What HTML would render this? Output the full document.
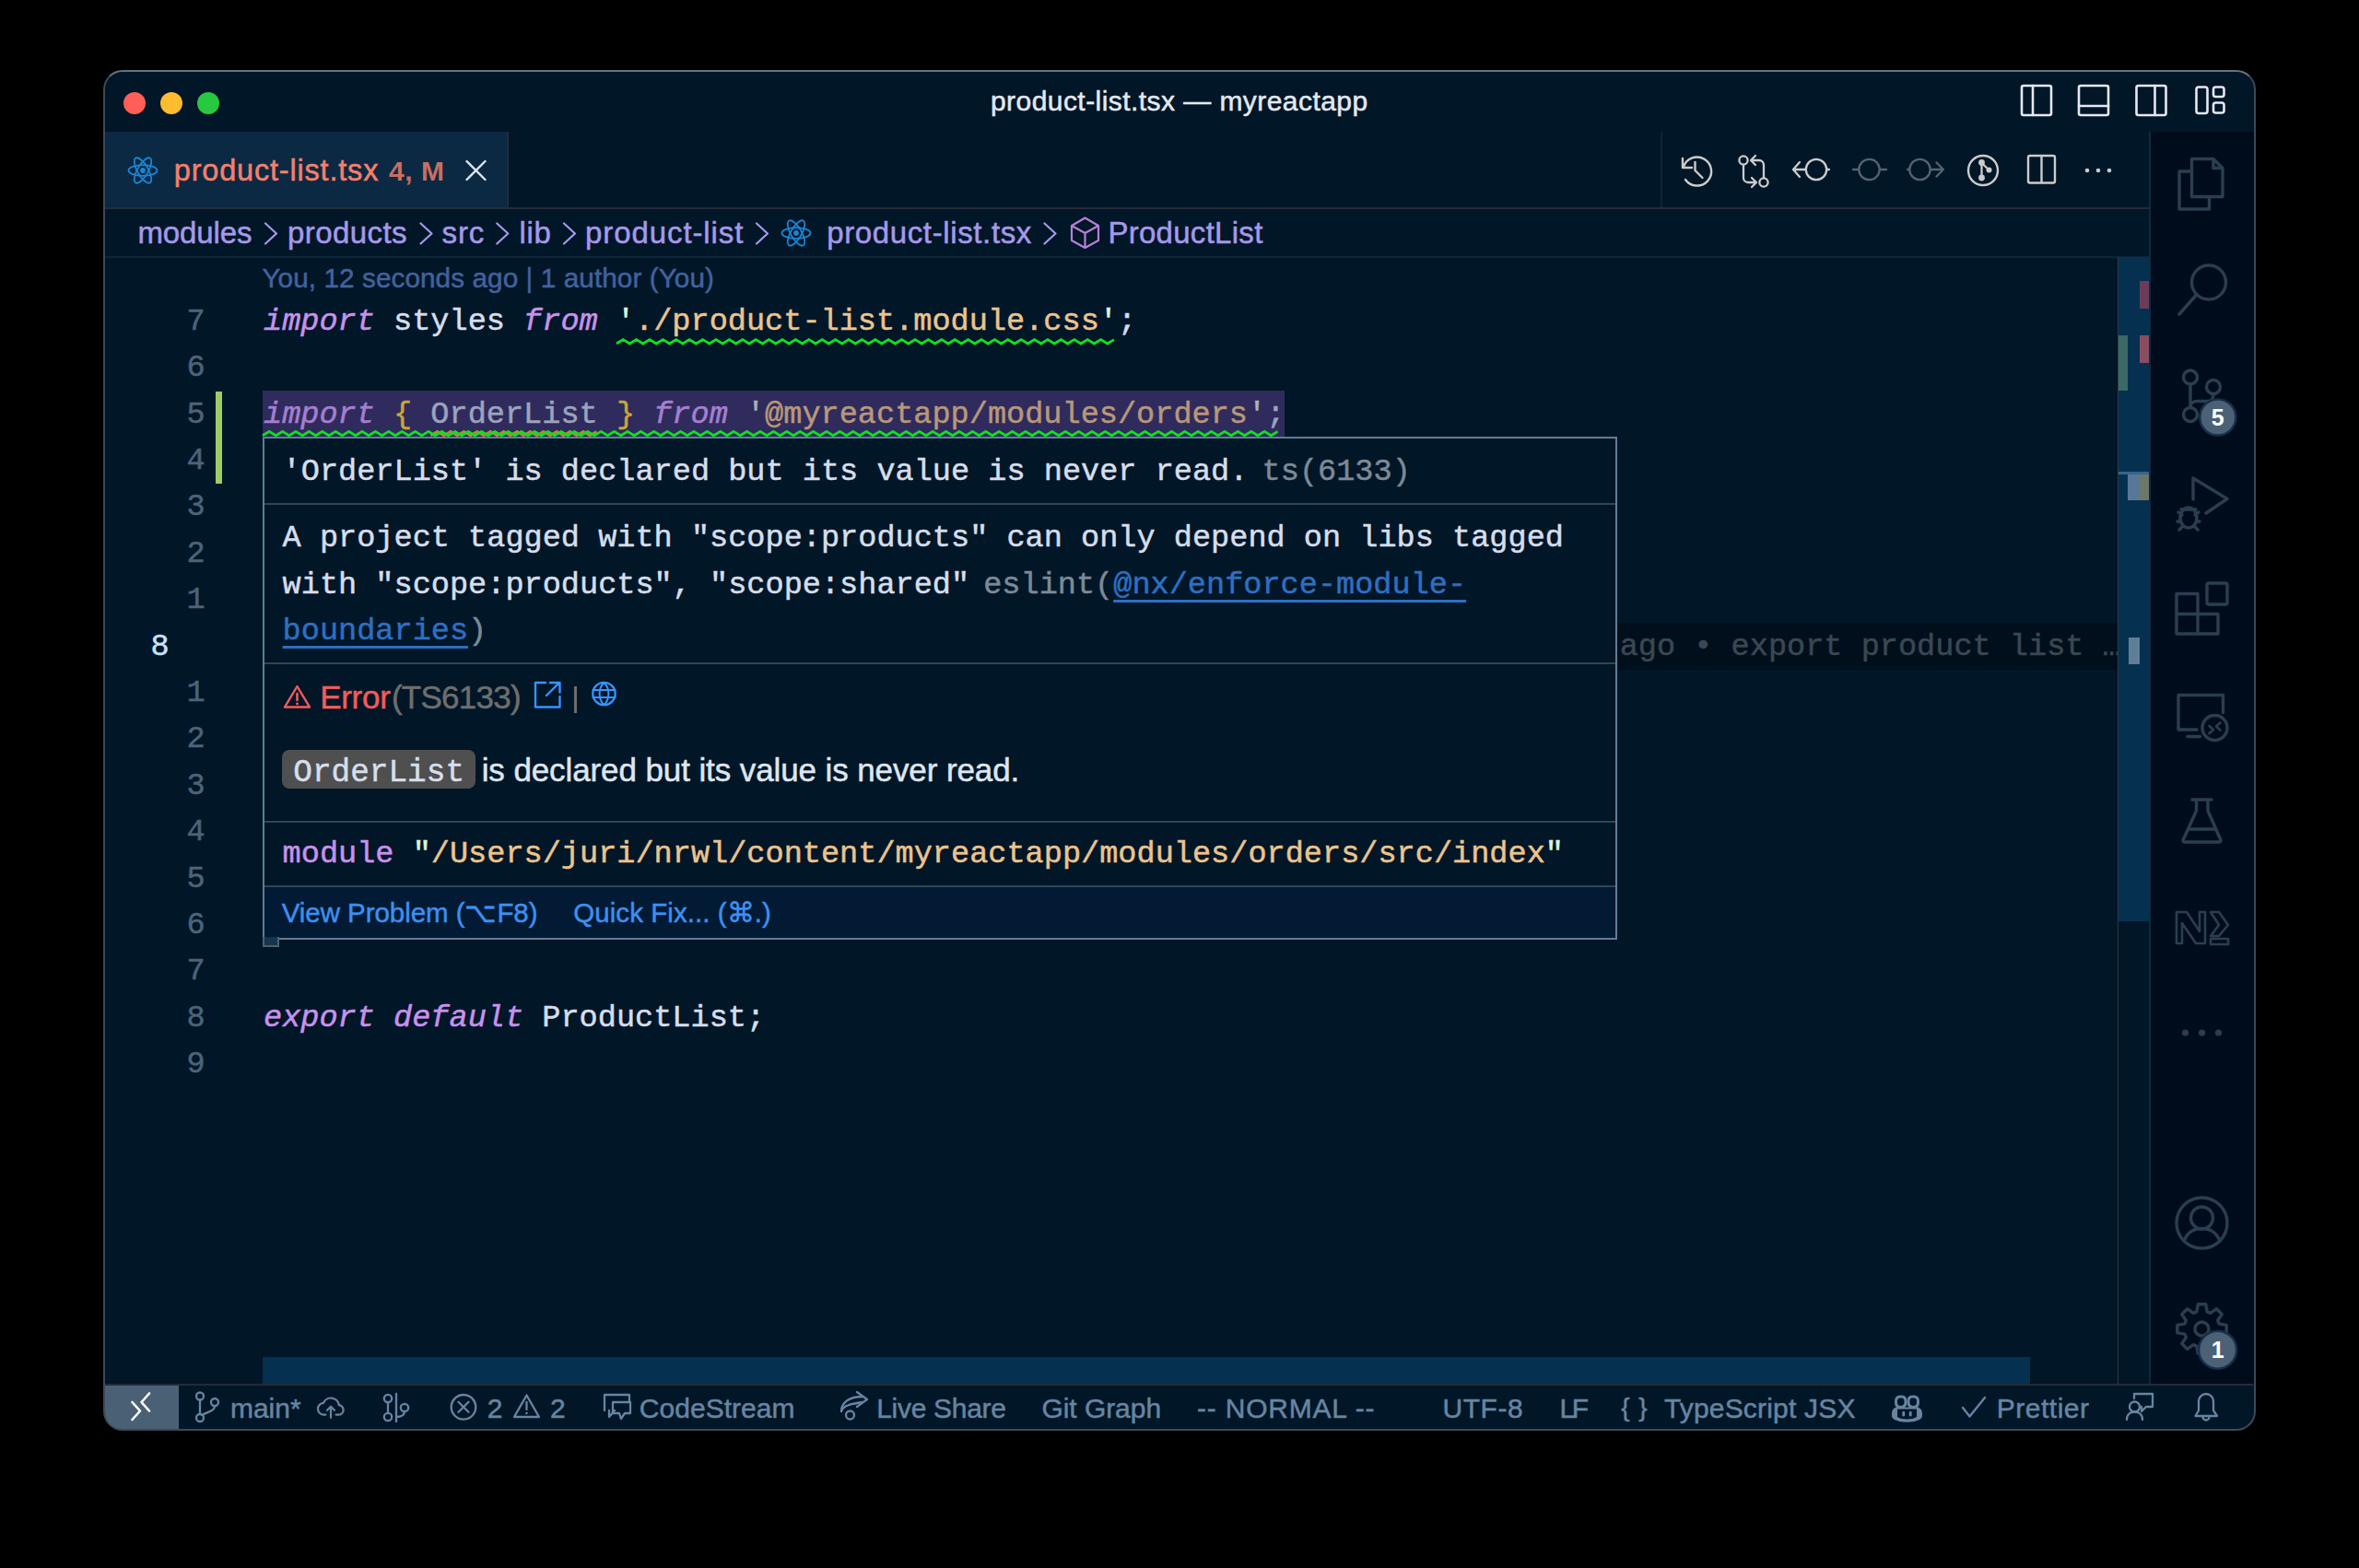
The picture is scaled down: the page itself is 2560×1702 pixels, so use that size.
<!DOCTYPE html>
<html><head><meta charset="utf-8">
<style>
*{margin:0;padding:0;box-sizing:border-box}
html,body{width:2560px;height:1702px;background:#000;overflow:hidden}
body{position:relative;font-family:"Liberation Sans",sans-serif}
.a{position:absolute}
.t{white-space:pre;line-height:1;-webkit-text-stroke:0.5px currentColor}
.t span{-webkit-text-stroke:0.5px currentColor}
</style></head>
<body>
<div class="a" style="left:112px;top:76px;width:2336px;height:1477px;border-radius:21px;background:#011627;border:2px solid #3c4a57;border-top-color:#66737f;overflow:hidden"></div>
<div class="a" style="left:134px;top:100px;width:24px;height:24px;background:#ff5f57;border-radius:50%"></div>
<div class="a" style="left:174px;top:100px;width:24px;height:24px;background:#febc2e;border-radius:50%"></div>
<div class="a" style="left:214px;top:100px;width:24px;height:24px;background:#28c840;border-radius:50%"></div>
<div class="a t" id="r0" style="left:1075.0px;top:94.60px;font-family:'Liberation Sans',sans-serif;font-size:30px;color:#e4e9f1;letter-spacing:0.439px;">product-list.tsx — myreactapp</div>
<div class="a" style="left:114px;top:143px;width:436px;height:82px;background:#0b2942;"></div>
<div class="a" style="left:550px;top:143px;width:2px;height:82px;background:#272b3b;"></div>
<div class="a" style="left:114px;top:225px;width:2219px;height:2px;background:#272b3b;"></div>
<div class="a" style="left:1802px;top:143px;width:2px;height:82px;background:#0e2436;"></div>
<div class="a t" id="r1" style="left:188.8px;top:168.57px;font-family:'Liberation Sans',sans-serif;font-size:32.5px;color:#f4806c;letter-spacing:0.806px;">product-list.tsx</div>
<div class="a t" id="r2" style="left:422.1px;top:170.70px;font-family:'Liberation Sans',sans-serif;font-size:30px;color:#c86e62;letter-spacing:0.514px;font-weight:bold;-webkit-text-stroke:0;">4, M</div>
<div class="a t" id="r3" style="left:149.5px;top:236.15px;font-family:'Liberation Sans',sans-serif;font-size:33px;color:#a599e9;letter-spacing:-0.116px;">modules</div>
<div class="a t" id="r4" style="left:312.1px;top:236.15px;font-family:'Liberation Sans',sans-serif;font-size:33px;color:#a599e9;letter-spacing:0.409px;">products</div>
<div class="a t" id="r5" style="left:479.6px;top:236.15px;font-family:'Liberation Sans',sans-serif;font-size:33px;color:#a599e9;letter-spacing:0.820px;">src</div>
<div class="a t" id="r6" style="left:563.4px;top:236.15px;font-family:'Liberation Sans',sans-serif;font-size:33px;color:#a599e9;letter-spacing:0.754px;">lib</div>
<div class="a t" id="r7" style="left:635.0px;top:236.15px;font-family:'Liberation Sans',sans-serif;font-size:33px;color:#a599e9;letter-spacing:0.914px;">product-list</div>
<div class="a t" id="r8" style="left:897.2px;top:236.15px;font-family:'Liberation Sans',sans-serif;font-size:33px;color:#a599e9;letter-spacing:0.627px;">product-list.tsx</div>
<div class="a t" id="r9" style="left:1202.4px;top:236.15px;font-family:'Liberation Sans',sans-serif;font-size:33px;color:#a599e9;letter-spacing:0.285px;">ProductList</div>
<div class="a" style="left:114px;top:278px;width:2218px;height:2px;background:#0d2539;"></div>
<div class="a" style="left:286px;top:676.2px;width:2012px;height:50.4px;background:#010f1c;"></div>
<div class="a" style="left:285px;top:424px;width:1108.8px;height:50.4px;background:#2f2b5d;"></div>
<div class="a" style="left:234px;top:424.5px;width:7px;height:100.8px;background:#9ccc65;"></div>
<div class="a t" id="r10" style="left:284.4px;top:286.86px;font-family:'Liberation Sans',sans-serif;font-size:29.7px;color:#43629d;letter-spacing:0.088px;">You, 12 seconds ago | 1 author (You)</div>
<div class="a t" style="left:202.5px;top:332.86px;font-family:'Liberation Mono',monospace;font-size:33.6px;color:#4b6479;">7</div>
<div class="a t" style="left:202.5px;top:383.26px;font-family:'Liberation Mono',monospace;font-size:33.6px;color:#4b6479;">6</div>
<div class="a t" style="left:202.5px;top:433.66px;font-family:'Liberation Mono',monospace;font-size:33.6px;color:#4b6479;">5</div>
<div class="a t" style="left:202.5px;top:484.06px;font-family:'Liberation Mono',monospace;font-size:33.6px;color:#4b6479;">4</div>
<div class="a t" style="left:202.5px;top:534.46px;font-family:'Liberation Mono',monospace;font-size:33.6px;color:#4b6479;">3</div>
<div class="a t" style="left:202.5px;top:584.86px;font-family:'Liberation Mono',monospace;font-size:33.6px;color:#4b6479;">2</div>
<div class="a t" style="left:202.5px;top:635.26px;font-family:'Liberation Mono',monospace;font-size:33.6px;color:#4b6479;">1</div>
<div class="a t" style="left:163.5px;top:685.66px;font-family:'Liberation Mono',monospace;font-size:33.6px;color:#c5e4fd;">8</div>
<div class="a t" style="left:202.5px;top:736.06px;font-family:'Liberation Mono',monospace;font-size:33.6px;color:#4b6479;">1</div>
<div class="a t" style="left:202.5px;top:786.46px;font-family:'Liberation Mono',monospace;font-size:33.6px;color:#4b6479;">2</div>
<div class="a t" style="left:202.5px;top:836.86px;font-family:'Liberation Mono',monospace;font-size:33.6px;color:#4b6479;">3</div>
<div class="a t" style="left:202.5px;top:887.26px;font-family:'Liberation Mono',monospace;font-size:33.6px;color:#4b6479;">4</div>
<div class="a t" style="left:202.5px;top:937.66px;font-family:'Liberation Mono',monospace;font-size:33.6px;color:#4b6479;">5</div>
<div class="a t" style="left:202.5px;top:988.06px;font-family:'Liberation Mono',monospace;font-size:33.6px;color:#4b6479;">6</div>
<div class="a t" style="left:202.5px;top:1038.46px;font-family:'Liberation Mono',monospace;font-size:33.6px;color:#4b6479;">7</div>
<div class="a t" style="left:202.5px;top:1088.86px;font-family:'Liberation Mono',monospace;font-size:33.6px;color:#4b6479;">8</div>
<div class="a t" style="left:202.5px;top:1139.26px;font-family:'Liberation Mono',monospace;font-size:33.6px;color:#4b6479;">9</div>
<div class="a t" style="left:286.0px;top:332.86px;font-family:'Liberation Mono',monospace;font-size:33.6px;"><span style="color:#c792ea;font-style:italic;">import</span><span style="color:#d6deeb;"> styles </span><span style="color:#c792ea;font-style:italic;">from</span><span style="color:#d6deeb;"> </span><span style="color:#d9f5dd;">&#x27;</span><span style="color:#ecc48d;">./product-list.module.css</span><span style="color:#d9f5dd;">&#x27;</span><span style="color:#d6deeb;">;</span></div>
<div class="a t" style="left:286.0px;top:433.66px;font-family:'Liberation Mono',monospace;font-size:33.6px;"><span style="color:#a47fcf;font-style:italic;">import</span><span style="color:#d6deeb;"> </span><span style="color:#c9a63a;">{</span><span style="color:#9ca3bd;"> OrderList </span><span style="color:#c9a63a;">}</span><span style="color:#d6deeb;"> </span><span style="color:#a47fcf;font-style:italic;">from</span><span style="color:#d6deeb;"> </span><span style="color:#a8b3b0;">&#x27;</span><span style="color:#b8977a;">@myreactapp/modules/orders</span><span style="color:#a8b3b0;">&#x27;</span><span style="color:#9ca3bd;">;</span></div>
<div class="a t" style="left:286.0px;top:1088.86px;font-family:'Liberation Mono',monospace;font-size:33.6px;"><span style="color:#c792ea;font-style:italic;">export</span><span style="color:#d6deeb;"> </span><span style="color:#c792ea;font-style:italic;">default</span><span style="color:#d6deeb;"> ProductList;</span></div>
<div class="a t" style="left:1757.7px;top:685.66px;font-family:'Liberation Mono',monospace;font-size:33.6px;color:#3a4853;">ago • export product list …</div>
<div class="a" style="left:285px;top:474px;width:1470px;height:545.5px;background:#011627;border:2px solid #5f7e97"></div>
<div class="a" style="left:287px;top:962px;width:1466px;height:55.5px;background:#021a33;"></div>
<div class="a" style="left:287px;top:546px;width:1466px;height:2px;background:#2e465a;"></div>
<div class="a" style="left:287px;top:719px;width:1466px;height:2px;background:#2e465a;"></div>
<div class="a" style="left:287px;top:891px;width:1466px;height:2px;background:#2e465a;"></div>
<div class="a" style="left:287px;top:961px;width:1466px;height:2px;background:#2e465a;"></div>
<div class="a t" style="left:306.6px;top:496.26px;font-family:'Liberation Mono',monospace;font-size:33.6px;color:#d6deeb;">'OrderList' is declared but its value is never read.</div>
<div class="a t" style="left:1369.6px;top:496.26px;font-family:'Liberation Mono',monospace;font-size:33.6px;color:#7d8a96;">ts(6133)</div>
<div class="a t" style="left:306.6px;top:568.36px;font-family:'Liberation Mono',monospace;font-size:33.6px;color:#d6deeb;">A project tagged with "scope:products" can only depend on libs tagged</div>
<div class="a t" style="left:306.6px;top:619.26px;font-family:'Liberation Mono',monospace;font-size:33.6px;color:#d6deeb;">with "scope:products", "scope:shared"</div>
<div class="a t" style="left:1067.2px;top:619.26px;font-family:'Liberation Mono',monospace;font-size:33.6px;"><span style="color:#7d8a96;">eslint(</span><span style="color:#2e6fc2;text-decoration:underline;text-decoration-thickness:3px;text-underline-offset:7px;">@nx/enforce-module-</span></div>
<div class="a t" style="left:306.6px;top:669.46px;font-family:'Liberation Mono',monospace;font-size:33.6px;"><span style="color:#2e6fc2;text-decoration:underline;text-decoration-thickness:3px;text-underline-offset:7px;">boundaries</span><span style="color:#7d8a96;">)</span></div>
<div class="a t" id="r11" style="left:347.2px;top:738.95px;font-family:'Liberation Sans',sans-serif;font-size:35px;color:#f25c5c;letter-spacing:-0.295px;">Error</div>
<div class="a t" id="r12" style="left:424.9px;top:738.95px;font-family:'Liberation Sans',sans-serif;font-size:35px;color:#6e6e6e;letter-spacing:-0.729px;">(TS6133)</div>
<div class="a" style="left:623px;top:745px;width:2.6px;height:29px;background:#6e6e6e;"></div>
<div class="a" style="left:306px;top:814px;width:209.5px;height:42px;background:#4f4f4f;border-radius:8px"></div>
<div class="a t" style="left:318.3px;top:821.85px;font-family:'Liberation Mono',monospace;font-size:34.4px;color:#d6deeb;">OrderList</div>
<div class="a t" id="r13" style="left:522.7px;top:818.45px;font-family:'Liberation Sans',sans-serif;font-size:35px;color:#dfe6f0;letter-spacing:-0.101px;">is declared but its value is never read.</div>
<div class="a t" style="left:306.6px;top:910.76px;font-family:'Liberation Mono',monospace;font-size:33.6px;"><span style="color:#c792ea;">module</span><span style="color:#d6deeb;"> </span><span style="color:#d9f5dd;">&quot;</span><span style="color:#ecc48d;">/Users/juri/nrwl/content/myreactapp/modules/orders/src/index</span><span style="color:#d9f5dd;">&quot;</span></div>
<div class="a t" id="r14" style="left:305.7px;top:976.42px;font-family:'Liberation Sans',sans-serif;font-size:29.5px;color:#3d8ff0;letter-spacing:-0.051px;">View Problem (⌥F8)</div>
<div class="a t" id="r15" style="left:622.2px;top:976.42px;font-family:'Liberation Sans',sans-serif;font-size:29.5px;color:#3d8ff0;letter-spacing:0.075px;">Quick Fix... (⌘.)</div>
<div class="a" style="left:285px;top:1017px;width:18px;height:11px;background:#16344e;border:2px solid #4e6070;border-top:none"></div>
<div class="a" style="left:2298px;top:279px;width:1px;height:1224px;background:#2f3a45;"></div>
<div class="a" style="left:2298.5px;top:279px;width:34px;height:721px;background:#06304f;"></div>
<div class="a" style="left:2321.5px;top:305px;width:11px;height:29.6px;background:#6c3c5a;"></div>
<div class="a" style="left:2321.5px;top:364px;width:11px;height:29.6px;background:#8a4e62;"></div>
<div class="a" style="left:2298.5px;top:364px;width:10.5px;height:60px;background:#3b6a66;"></div>
<div class="a" style="left:2298.5px;top:511.5px;width:34px;height:3.5px;background:#35658f;"></div>
<div class="a" style="left:2309px;top:515px;width:12.5px;height:28px;background:#587796;"></div>
<div class="a" style="left:2321.5px;top:515px;width:11px;height:28px;background:#6e7668;"></div>
<div class="a" style="left:2309.5px;top:691.5px;width:12.5px;height:29.5px;background:#5f7e97;"></div>
<div class="a" style="left:285px;top:1473px;width:1918px;height:29.5px;background:#06304f;"></div>
<div class="a" style="left:2334px;top:143px;width:112px;height:1359px;background:#000c1c;"></div>
<div class="a" style="left:2332px;top:143px;width:2px;height:1359px;background:#11293f;"></div>
<div class="a" style="left:114px;top:1502px;width:2331px;height:2px;background:#262a39;"></div>
<div class="a" style="left:114px;top:1504px;width:80px;height:47px;background:#4a6075;border-bottom-left-radius:18px"></div>
<div class="a t" id="r16" style="left:249.9px;top:1513.60px;font-family:'Liberation Sans',sans-serif;font-size:30px;color:#6785a1;letter-spacing:-0.001px;">main*</div>
<div class="a t" style="left:528.7px;top:1513.60px;font-family:'Liberation Sans',sans-serif;font-size:30px;color:#6785a1;">2</div>
<div class="a t" style="left:597.1px;top:1513.60px;font-family:'Liberation Sans',sans-serif;font-size:30px;color:#6785a1;">2</div>
<div class="a t" id="r17" style="left:693.8px;top:1513.60px;font-family:'Liberation Sans',sans-serif;font-size:30px;color:#6785a1;letter-spacing:0.031px;">CodeStream</div>
<div class="a t" id="r18" style="left:951.2px;top:1513.60px;font-family:'Liberation Sans',sans-serif;font-size:30px;color:#6785a1;letter-spacing:-0.293px;">Live Share</div>
<div class="a t" id="r19" style="left:1130.4px;top:1513.60px;font-family:'Liberation Sans',sans-serif;font-size:30px;color:#6785a1;letter-spacing:-0.045px;">Git Graph</div>
<div class="a t" id="r20" style="left:1299.1px;top:1513.60px;font-family:'Liberation Sans',sans-serif;font-size:30px;color:#6785a1;letter-spacing:0.784px;">-- NORMAL --</div>
<div class="a t" id="r21" style="left:1565.6px;top:1513.60px;font-family:'Liberation Sans',sans-serif;font-size:30px;color:#6785a1;letter-spacing:0.500px;">UTF-8</div>
<div class="a t" id="r22" style="left:1692.4px;top:1513.60px;font-family:'Liberation Sans',sans-serif;font-size:30px;color:#6785a1;letter-spacing:-3.416px;">LF</div>
<div class="a t" id="r23" style="left:1759.3px;top:1514.30px;font-family:'Liberation Sans',sans-serif;font-size:28px;color:#6785a1;letter-spacing:0.878px;">{ }</div>
<div class="a t" id="r24" style="left:1805.9px;top:1513.60px;font-family:'Liberation Sans',sans-serif;font-size:30px;color:#6785a1;letter-spacing:0.186px;">TypeScript JSX</div>
<div class="a t" id="r25" style="left:2166.8px;top:1513.60px;font-family:'Liberation Sans',sans-serif;font-size:30px;color:#6785a1;letter-spacing:0.500px;">Prettier</div>
<svg class="a" style="left:0;top:0" width="2560" height="1702" viewBox="0 0 2560 1702">
<path d="M2194,95 a2,2 0 0 1 2,-2 h28 a2,2 0 0 1 2,2 v28 a2,2 0 0 1 -2,2 h-28 a2,2 0 0 1 -2,-2 z" stroke="#e6e8f4" stroke-width="2.6" fill="none" stroke-linecap="round" stroke-linejoin="round" />
<path d="M2206,93 v32" stroke="#e6e8f4" stroke-width="2.6" fill="none" stroke-linecap="round" stroke-linejoin="round" />
<path d="M2256,95 a2,2 0 0 1 2,-2 h28 a2,2 0 0 1 2,2 v28 a2,2 0 0 1 -2,2 h-28 a2,2 0 0 1 -2,-2 z" stroke="#e6e8f4" stroke-width="2.6" fill="none" stroke-linecap="round" stroke-linejoin="round" />
<path d="M2256,115 h32" stroke="#e6e8f4" stroke-width="2.6" fill="none" stroke-linecap="round" stroke-linejoin="round" />
<path d="M2318.5,95 a2,2 0 0 1 2,-2 h28 a2,2 0 0 1 2,2 v28 a2,2 0 0 1 -2,2 h-28 a2,2 0 0 1 -2,-2 z" stroke="#e6e8f4" stroke-width="2.6" fill="none" stroke-linecap="round" stroke-linejoin="round" />
<path d="M2338.5,93 v32" stroke="#e6e8f4" stroke-width="2.6" fill="none" stroke-linecap="round" stroke-linejoin="round" />
<path d="M2383.5,97 a2.5,2.5 0 0 1 2.5,-2.5 h7 a2.5,2.5 0 0 1 2.5,2.5 v23.5 a2.5,2.5 0 0 1 -2.5,2.5 h-7 a2.5,2.5 0 0 1 -2.5,-2.5 z" stroke="#e6e8f4" stroke-width="2.6" fill="none" stroke-linecap="round" stroke-linejoin="round" />
<path d="M2402,97 a2.5,2.5 0 0 1 2.5,-2.5 h6.5 a2.5,2.5 0 0 1 2.5,2.5 v5.5 a2.5,2.5 0 0 1 -2.5,2.5 h-6.5 a2.5,2.5 0 0 1 -2.5,-2.5 z" stroke="#e6e8f4" stroke-width="2.6" fill="none" stroke-linecap="round" stroke-linejoin="round" />
<path d="M2402,114 a2.5,2.5 0 0 1 2.5,-2.5 h6.5 a2.5,2.5 0 0 1 2.5,2.5 v6 a2.5,2.5 0 0 1 -2.5,2.5 h-6.5 a2.5,2.5 0 0 1 -2.5,-2.5 z" stroke="#e6e8f4" stroke-width="2.6" fill="none" stroke-linecap="round" stroke-linejoin="round" />
<ellipse cx="155" cy="185" rx="15.5" ry="5.8" transform="rotate(0 155 185)" stroke="#1a86d3" stroke-width="1.8" fill="none"/>
<ellipse cx="155" cy="185" rx="15.5" ry="5.8" transform="rotate(60 155 185)" stroke="#1a86d3" stroke-width="1.8" fill="none"/>
<ellipse cx="155" cy="185" rx="15.5" ry="5.8" transform="rotate(120 155 185)" stroke="#1a86d3" stroke-width="1.8" fill="none"/>
<circle cx="155" cy="185" r="2.9" fill="#1a86d3"/>
<path d="M506.5,175 L526.5,195 M526.5,175 L506.5,195" stroke="#dde4ee" stroke-width="2.4" fill="none" stroke-linecap="round" stroke-linejoin="round" />
<path d="M1826,172 v10 h10" stroke="#cccccc" stroke-width="2.4" fill="none" stroke-linecap="round" stroke-linejoin="round" />
<path d="M1827,181 A15.5,15.5 0 1 1 1829,195" stroke="#cccccc" stroke-width="2.4" fill="none" stroke-linecap="round" stroke-linejoin="round" />
<path d="M1839.5,176 v9 l8,8" stroke="#cccccc" stroke-width="2.4" fill="none" stroke-linecap="round" stroke-linejoin="round" />
<circle cx="1892" cy="174" r="4.6" stroke="#cccccc" stroke-width="2.3" fill="none"/>
<circle cx="1914" cy="198" r="4.6" stroke="#cccccc" stroke-width="2.3" fill="none"/>
<path d="M1892,179 v14 a5,5 0 0 0 5,5 h8 M1901,193 l5,5 l-5,5" stroke="#cccccc" stroke-width="2.3" fill="none" stroke-linecap="round" stroke-linejoin="round" />
<path d="M1914,193 v-14 a5,5 0 0 0 -5,-5 h-8 M1905,169 l-5,5 l5,5" stroke="#cccccc" stroke-width="2.3" fill="none" stroke-linecap="round" stroke-linejoin="round" />
<circle cx="1971" cy="184" r="11.2" stroke="#cccccc" stroke-width="2.3" fill="none"/>
<path d="M1983,184 h2 M1959.5,184 h-12 M1953,176 l-7,8 l7,8" stroke="#cccccc" stroke-width="2.3" fill="none" stroke-linecap="round" stroke-linejoin="round" />
<circle cx="2028.5" cy="184" r="11.2" stroke="#56626e" stroke-width="2.3" fill="none"/>
<path d="M2011,184 h6 M2040,184 h7" stroke="#56626e" stroke-width="2.3" fill="none" stroke-linecap="round" stroke-linejoin="round" />
<circle cx="2083.5" cy="184" r="11.2" stroke="#56626e" stroke-width="2.3" fill="none"/>
<path d="M2070,184 h2 M2095,184 h13 M2101.5,176.5 l7.5,7.5 l-7.5,7.5" stroke="#56626e" stroke-width="2.3" fill="none" stroke-linecap="round" stroke-linejoin="round" />
<circle cx="2152" cy="185" r="16" stroke="#cccccc" stroke-width="2.4" fill="none"/>
<circle cx="2150.5" cy="176.5" r="3.4" stroke="#cccccc" stroke-width="0" fill="#cccccc"/>
<circle cx="2150.5" cy="193" r="3.4" stroke="#cccccc" stroke-width="0" fill="#cccccc"/>
<circle cx="2158.5" cy="184.5" r="3.0" stroke="#cccccc" stroke-width="0" fill="#cccccc"/>
<path d="M2150.5,176 v17 M2150.5,177 l7.5,7" stroke="#cccccc" stroke-width="2.3" fill="none" stroke-linecap="round" stroke-linejoin="round" />
<path d="M2201,171 a2,2 0 0 1 2,-2 h25 a2,2 0 0 1 2,2 v25.5 a2,2 0 0 1 -2,2 h-25 a2,2 0 0 1 -2,-2 z M2215.5,169 v29.5" stroke="#cccccc" stroke-width="2.4" fill="none" stroke-linecap="round" stroke-linejoin="round" />
<circle cx="2265" cy="185" r="2.3" stroke="#cccccc" stroke-width="0" fill="#cccccc"/>
<circle cx="2277" cy="185" r="2.3" stroke="#cccccc" stroke-width="0" fill="#cccccc"/>
<circle cx="2289" cy="185" r="2.3" stroke="#cccccc" stroke-width="0" fill="#cccccc"/>
<path d="M288,242.5 L300,253.5 L288,264.5" stroke="#a599e9" stroke-width="2.2" fill="none" stroke-linecap="round" stroke-linejoin="round" />
<path d="M456.5,242.5 L468.5,253.5 L456.5,264.5" stroke="#a599e9" stroke-width="2.2" fill="none" stroke-linecap="round" stroke-linejoin="round" />
<path d="M539.3,242.5 L551.3,253.5 L539.3,264.5" stroke="#a599e9" stroke-width="2.2" fill="none" stroke-linecap="round" stroke-linejoin="round" />
<path d="M612,242.5 L624,253.5 L612,264.5" stroke="#a599e9" stroke-width="2.2" fill="none" stroke-linecap="round" stroke-linejoin="round" />
<path d="M821,242.5 L833,253.5 L821,264.5" stroke="#a599e9" stroke-width="2.2" fill="none" stroke-linecap="round" stroke-linejoin="round" />
<path d="M1133.5,242.5 L1145.5,253.5 L1133.5,264.5" stroke="#a599e9" stroke-width="2.2" fill="none" stroke-linecap="round" stroke-linejoin="round" />
<ellipse cx="864" cy="253" rx="15.5" ry="5.8" transform="rotate(0 864 253)" stroke="#1a86d3" stroke-width="1.8" fill="none"/>
<ellipse cx="864" cy="253" rx="15.5" ry="5.8" transform="rotate(60 864 253)" stroke="#1a86d3" stroke-width="1.8" fill="none"/>
<ellipse cx="864" cy="253" rx="15.5" ry="5.8" transform="rotate(120 864 253)" stroke="#1a86d3" stroke-width="1.8" fill="none"/>
<circle cx="864" cy="253" r="2.9" fill="#1a86d3"/>
<path d="M1177.5,236.5 L1192,245 V261 L1177.5,269 L1163,261 V245 Z M1163,245 L1177.5,253 L1192,245 M1177.5,253 V269" stroke="#b77fd6" stroke-width="2.2" fill="none" stroke-linecap="round" stroke-linejoin="round" />
<polyline points="669.0,373.0 676.2,368.6 683.4,373.0 690.6,368.6 697.8,373.0 705.0,368.6 712.2,373.0 719.4,368.6 726.6,373.0 733.8,368.6 741.0,373.0 748.2,368.6 755.4,373.0 762.6,368.6 769.8,373.0 777.0,368.6 784.2,373.0 791.4,368.6 798.6,373.0 805.8,368.6 813.0,373.0 820.2,368.6 827.4,373.0 834.6,368.6 841.8,373.0 849.0,368.6 856.2,373.0 863.4,368.6 870.6,373.0 877.8,368.6 885.0,373.0 892.2,368.6 899.4,373.0 906.6,368.6 913.8,373.0 921.0,368.6 928.2,373.0 935.4,368.6 942.6,373.0 949.8,368.6 957.0,373.0 964.2,368.6 971.4,373.0 978.6,368.6 985.8,373.0 993.0,368.6 1000.2,373.0 1007.4,368.6 1014.6,373.0 1021.8,368.6 1029.0,373.0 1036.2,368.6 1043.4,373.0 1050.6,368.6 1057.8,373.0 1065.0,368.6 1072.2,373.0 1079.4,368.6 1086.6,373.0 1093.8,368.6 1101.0,373.0 1108.2,368.6 1115.4,373.0 1122.6,368.6 1129.8,373.0 1137.0,368.6 1144.2,373.0 1151.4,368.6 1158.6,373.0 1165.8,368.6 1173.0,373.0 1180.2,368.6 1187.4,373.0 1194.6,368.6 1201.8,373.0 1209.0,368.6" stroke="#10e020" stroke-width="2.8" fill="none"/>
<polyline points="467.4,472.8 474.6,468.4 481.8,472.8 489.0,468.4 496.2,472.8 503.4,468.4 510.6,472.8 517.8,468.4 525.0,472.8 532.2,468.4 539.4,472.8 546.6,468.4 553.8,472.8 561.0,468.4 568.2,472.8 575.4,468.4 582.6,472.8 589.8,468.4 597.0,472.8 604.2,468.4 611.4,472.8 618.6,468.4 625.8,472.8 633.0,468.4 640.2,472.8 647.4,468.4" stroke="#c0843a" stroke-width="2.8" fill="none"/>
<polyline points="285.0,472.8 292.2,468.4 299.4,472.8 306.6,468.4 313.8,472.8 321.0,468.4 328.2,472.8 335.4,468.4 342.6,472.8 349.8,468.4 357.0,472.8 364.2,468.4 371.4,472.8 378.6,468.4 385.8,472.8 393.0,468.4 400.2,472.8 407.4,468.4 414.6,472.8 421.8,468.4 429.0,472.8 436.2,468.4 443.4,472.8 450.6,468.4 457.8,472.8 465.0,468.4 472.2,472.8 479.4,468.4 486.6,472.8 493.8,468.4 501.0,472.8 508.2,468.4 515.4,472.8 522.6,468.4 529.8,472.8 537.0,468.4 544.2,472.8 551.4,468.4 558.6,472.8 565.8,468.4 573.0,472.8 580.2,468.4 587.4,472.8 594.6,468.4 601.8,472.8 609.0,468.4 616.2,472.8 623.4,468.4 630.6,472.8 637.8,468.4 645.0,472.8 652.2,468.4 659.4,472.8 666.6,468.4 673.8,472.8 681.0,468.4 688.2,472.8 695.4,468.4 702.6,472.8 709.8,468.4 717.0,472.8 724.2,468.4 731.4,472.8 738.6,468.4 745.8,472.8 753.0,468.4 760.2,472.8 767.4,468.4 774.6,472.8 781.8,468.4 789.0,472.8 796.2,468.4 803.4,472.8 810.6,468.4 817.8,472.8 825.0,468.4 832.2,472.8 839.4,468.4 846.6,472.8 853.8,468.4 861.0,472.8 868.2,468.4 875.4,472.8 882.6,468.4 889.8,472.8 897.0,468.4 904.2,472.8 911.4,468.4 918.6,472.8 925.8,468.4 933.0,472.8 940.2,468.4 947.4,472.8 954.6,468.4 961.8,472.8 969.0,468.4 976.2,472.8 983.4,468.4 990.6,472.8 997.8,468.4 1005.0,472.8 1012.2,468.4 1019.4,472.8 1026.6,468.4 1033.8,472.8 1041.0,468.4 1048.2,472.8 1055.4,468.4 1062.6,472.8 1069.8,468.4 1077.0,472.8 1084.2,468.4 1091.4,472.8 1098.6,468.4 1105.8,472.8 1113.0,468.4 1120.2,472.8 1127.4,468.4 1134.6,472.8 1141.8,468.4 1149.0,472.8 1156.2,468.4 1163.4,472.8 1170.6,468.4 1177.8,472.8 1185.0,468.4 1192.2,472.8 1199.4,468.4 1206.6,472.8 1213.8,468.4 1221.0,472.8 1228.2,468.4 1235.4,472.8 1242.6,468.4 1249.8,472.8 1257.0,468.4 1264.2,472.8 1271.4,468.4 1278.6,472.8 1285.8,468.4 1293.0,472.8 1300.2,468.4 1307.4,472.8 1314.6,468.4 1321.8,472.8 1329.0,468.4 1336.2,472.8 1343.4,468.4 1350.6,472.8 1357.8,468.4 1365.0,472.8 1372.2,468.4 1379.4,472.8 1386.6,468.4" stroke="#10e020" stroke-width="2.8" fill="none"/>
<path d="M322.5,745 L336,767.5 H309 Z" stroke="#f25c5c" stroke-width="2.4" fill="none" stroke-linecap="round" stroke-linejoin="round" />
<path d="M322.5,753 v7" stroke="#f25c5c" stroke-width="2.6" fill="none" stroke-linecap="round" stroke-linejoin="round" />
<circle cx="322.5" cy="764" r="1.4" stroke="#f25c5c" stroke-width="0" fill="#f25c5c"/>
<path d="M592,741 H581 V767.5 H607.5 V756 M593,755 L606,742 M597,741 H607.5 V751.5" stroke="#3794ff" stroke-width="2.4" fill="none" stroke-linecap="round" stroke-linejoin="round" />
<circle cx="655.5" cy="753" r="12.2" stroke="#3794ff" stroke-width="2.3" fill="none"/>
<path d="M643.5,749 H667.5 M643.5,757 H667.5 M655.5,741 C649,747 649,759 655.5,765 C662,759 662,747 655.5,741" stroke="#3794ff" stroke-width="2.0" fill="none" stroke-linecap="round" stroke-linejoin="round" />
<path d="M2378.5,186 H2365 V227 H2397.5 V213.5" stroke="#2b3e50" stroke-width="3.4" fill="none" stroke-linecap="round" stroke-linejoin="round" />
<path d="M2378.5,172.5 H2402 L2412,182.5 V213.5 H2378.5 Z M2402,172.5 V182.5 H2412" stroke="#2b3e50" stroke-width="3.4" fill="none" stroke-linecap="round" stroke-linejoin="round" />
<circle cx="2397" cy="306.5" r="18.5" stroke="#2b3e50" stroke-width="3.4" fill="none"/>
<path d="M2384,319.5 L2365,341" stroke="#2b3e50" stroke-width="3.4" fill="none" stroke-linecap="round" stroke-linejoin="round" />
<circle cx="2377" cy="409.5" r="7.5" stroke="#2b3e50" stroke-width="3.4" fill="none"/>
<circle cx="2377" cy="450" r="7.5" stroke="#2b3e50" stroke-width="3.4" fill="none"/>
<circle cx="2402" cy="420" r="7.5" stroke="#2b3e50" stroke-width="3.4" fill="none"/>
<path d="M2377,417 V442.5 M2402,427.5 C2402,432 2400,435.5 2396,435.5 H2384 C2380,435.5 2377,438 2377,442" stroke="#2b3e50" stroke-width="3.4" fill="none" stroke-linecap="round" stroke-linejoin="round" />
<circle cx="2406.8" cy="453" r="19.5" stroke="#16304a" stroke-width="2.5" fill="#4c6176"/>
<path d="M2380,519 L2417,541.5 L2394,557 M2380,519 V542" stroke="#2b3e50" stroke-width="3.4" fill="none" stroke-linecap="round" stroke-linejoin="round" />
<ellipse cx="2375" cy="562" rx="9" ry="11" stroke="#2b3e50" stroke-width="3.4" fill="none"/>
<path d="M2364,556 L2368,559 M2386,556 L2382,559 M2363,566 H2366 M2387,566 H2384 M2365,575 L2369,571 M2385,575 L2381,571 M2367,553 H2383" stroke="#2b3e50" stroke-width="3.4" fill="none" stroke-linecap="round" stroke-linejoin="round" />
<path d="M2362,644.5 H2385 V666.5 H2407 V688 H2362 Z M2362,666.5 H2385 V688" stroke="#2b3e50" stroke-width="3.4" fill="none" stroke-linecap="round" stroke-linejoin="round" />
<path d="M2397,633 H2415 a2,2 0 0 1 2,2 V654 a2,2 0 0 1 -2,2 H2397 a2,2 0 0 1 -2,-2 V635 a2,2 0 0 1 2,-2 Z" stroke="#2b3e50" stroke-width="3.4" fill="none" stroke-linecap="round" stroke-linejoin="round" />
<path d="M2412.5,773.5 V754.5 H2364 V792 H2384" stroke="#2b3e50" stroke-width="3.4" fill="none" stroke-linecap="round" stroke-linejoin="round" />
<path d="M2374,799.5 H2387.5" stroke="#2b3e50" stroke-width="3.4" fill="none" stroke-linecap="round" stroke-linejoin="round" />
<circle cx="2403.5" cy="790" r="13.5" stroke="#2b3e50" stroke-width="3.4" fill="none"/>
<path d="M2397.5,788 L2402,792 L2397.5,796 M2409.5,784.5 L2405,788.5 L2409.5,792.5" stroke="#2b3e50" stroke-width="2.6" fill="none" stroke-linecap="round" stroke-linejoin="round" />
<path d="M2379,868 H2400 M2383.5,868 V880 L2369,912 a2,2 0 0 0 2,2 H2408 a2,2 0 0 0 2,-2 L2396,880 V868 M2375,900 H2405" stroke="#2b3e50" stroke-width="3.4" fill="none" stroke-linecap="round" stroke-linejoin="round" />
<path d="M2362,990 H2373 L2387,1011 V990 H2393 V1024 H2383 L2368,1002 V1024 H2362 Z" stroke="#2b3e50" stroke-width="2.6" fill="none" stroke-linecap="round" stroke-linejoin="round" />
<path d="M2399,990 H2408 L2418,1004 L2408,1016 H2399 L2408,1004 Z M2399,1019 H2418 V1025 H2399 Z" stroke="#2b3e50" stroke-width="2.6" fill="none" stroke-linecap="round" stroke-linejoin="round" />
<circle cx="2371.5" cy="1121" r="3.6" stroke="#2b3e50" stroke-width="0" fill="#2b3e50"/>
<circle cx="2389.5" cy="1121" r="3.6" stroke="#2b3e50" stroke-width="0" fill="#2b3e50"/>
<circle cx="2407.5" cy="1121" r="3.6" stroke="#2b3e50" stroke-width="0" fill="#2b3e50"/>
<circle cx="2389.5" cy="1327.5" r="27.5" stroke="#2b3e50" stroke-width="3.4" fill="none"/>
<circle cx="2389.5" cy="1322" r="12" stroke="#2b3e50" stroke-width="3.4" fill="none"/>
<path d="M2370,1347 C2374,1337 2381,1333.5 2389.5,1333.5 C2398,1333.5 2405,1337 2409,1347" stroke="#2b3e50" stroke-width="3.4" fill="none" stroke-linecap="round" stroke-linejoin="round" />
<path d="M2385.3,1415.8 L2393.7,1415.8 L2395.2,1423.9 L2398.7,1425.3 L2405.4,1420.7 L2411.3,1426.6 L2406.7,1433.3 L2408.1,1436.8 L2416.2,1438.3 L2416.2,1446.7 L2408.1,1448.2 L2406.7,1451.7 L2411.3,1458.4 L2405.4,1464.3 L2398.7,1459.7 L2395.2,1461.1 L2393.7,1469.2 L2385.3,1469.2 L2383.8,1461.1 L2380.3,1459.7 L2373.6,1464.3 L2367.7,1458.4 L2372.3,1451.7 L2370.9,1448.2 L2362.8,1446.7 L2362.8,1438.3 L2370.9,1436.8 L2372.3,1433.3 L2367.7,1426.6 L2373.6,1420.7 L2380.3,1425.3 L2383.8,1423.9 Z" stroke="#2b3e50" stroke-width="3.4" fill="none" stroke-linecap="round" stroke-linejoin="round" />
<circle cx="2389.5" cy="1442.5" r="7.5" stroke="#2b3e50" stroke-width="3.4" fill="none"/>
<circle cx="2406.6" cy="1465.2" r="20.5" stroke="#16304a" stroke-width="2.5" fill="#4c6176"/>
<text x="2406.8" y="462" font-family="Liberation Sans" font-weight="bold" font-size="25" fill="#fff" text-anchor="middle">5</text>
<text x="2406.6" y="1474.2" font-family="Liberation Sans" font-weight="bold" font-size="25" fill="#fff" text-anchor="middle">1</text>
<path d="M2,0" stroke="#6785a1" stroke-width="2.5" fill="none" stroke-linecap="round" stroke-linejoin="round" />
<path d="M143.5,1522 L152,1531.5 L143.5,1541 M162,1512.5 L153.5,1522 L162,1531.5" stroke="#ffffff" stroke-width="2.6" fill="none" stroke-linecap="round" stroke-linejoin="round" />
<circle cx="217" cy="1515.5" r="4" stroke="#6785a1" stroke-width="2.3" fill="none"/>
<circle cx="217" cy="1539" r="4" stroke="#6785a1" stroke-width="2.3" fill="none"/>
<circle cx="233" cy="1522" r="4" stroke="#6785a1" stroke-width="2.3" fill="none"/>
<path d="M217,1519.5 V1535 M233,1526 C233,1532 226,1532 219,1536" stroke="#6785a1" stroke-width="2.3" fill="none" stroke-linecap="round" stroke-linejoin="round" />
<g transform="translate(359 1530) scale(0.8) translate(-359 -1530)">
<path d="M352,1537 H350 a8,8 0 0 1 -1,-16 a11,11 0 0 1 21,3 a6.5,6.5 0 0 1 -1,13 H366" stroke="#6785a1" stroke-width="2.8" fill="none" stroke-linecap="round" stroke-linejoin="round" />
<path d="M359,1541 V1526 M354,1531 L359,1526 L364,1531" stroke="#6785a1" stroke-width="2.8" fill="none" stroke-linecap="round" stroke-linejoin="round" />
</g>
<circle cx="421" cy="1518" r="4.2" stroke="#6785a1" stroke-width="2.3" fill="none"/>
<circle cx="421" cy="1538" r="4.2" stroke="#6785a1" stroke-width="2.3" fill="none"/>
<circle cx="439" cy="1528" r="4.2" stroke="#6785a1" stroke-width="2.3" fill="none"/>
<path d="M421,1522 V1534 M430,1513 V1543 M439,1532 C439,1537 434,1538 430,1538" stroke="#6785a1" stroke-width="2.3" fill="none" stroke-linecap="round" stroke-linejoin="round" />
<circle cx="503" cy="1527.3" r="13.3" stroke="#6785a1" stroke-width="2.3" fill="none"/>
<path d="M497.5,1521.8 L508.5,1532.8 M508.5,1521.8 L497.5,1532.8" stroke="#6785a1" stroke-width="2.3" fill="none" stroke-linecap="round" stroke-linejoin="round" />
<path d="M571.5,1514.5 L585,1538 H558 Z M571.5,1522 V1530" stroke="#6785a1" stroke-width="2.3" fill="none" stroke-linecap="round" stroke-linejoin="round" />
<circle cx="571.5" cy="1534" r="1.3" stroke="#6785a1" stroke-width="0" fill="#6785a1"/>
<path d="M656,1531 V1514 H683 V1521 M661,1531 L661,1538 L667,1531" stroke="#6785a1" stroke-width="2.3" fill="none" stroke-linecap="round" stroke-linejoin="round" />
<path d="M665,1522 H684 V1534 H678 L674,1540 L672,1534 H665 Z" stroke="#6785a1" stroke-width="2.3" fill="none" stroke-linecap="round" stroke-linejoin="round" />
<circle cx="922.5" cy="1536" r="4.5" stroke="#6785a1" stroke-width="2.3" fill="none"/>
<path d="M913,1532 C913,1522 922,1516 936,1516 M930,1511 L941,1519 L930,1527" stroke="#6785a1" stroke-width="2.3" fill="none" stroke-linecap="round" stroke-linejoin="round" />
<path d="M913,1532 C915,1526 922,1524 936,1522" stroke="#6785a1" stroke-width="2.3" fill="none" stroke-linecap="round" stroke-linejoin="round" />
<path fill-rule="evenodd" fill="#6785a1" d="M2053,1534 C2053,1530.5 2055,1528.5 2057.5,1527.5 H2081.5 C2084,1528.5 2086,1530.5 2086,1534 V1537 C2086,1541 2078,1543.7 2069.5,1543.7 C2061,1543.7 2053,1541 2053,1537 Z M2059,1529.5 H2080 V1538 C2077,1539.8 2073,1540.5 2069.5,1540.5 C2066,1540.5 2062,1539.8 2059,1538 Z"/>
<path d="M2062,1516 H2064 C2067,1516 2068,1518 2068,1521 V1522 C2068,1525.5 2066,1527.5 2062.5,1527.5 C2059,1527.5 2057.5,1525.5 2057.5,1522 V1521 C2057.5,1518 2059,1516 2062,1516 Z" stroke="#6785a1" stroke-width="3" fill="none" stroke-linecap="round" stroke-linejoin="round" />
<path d="M2075,1516 H2077 C2080,1516 2081.5,1518 2081.5,1521 V1522 C2081.5,1525.5 2080,1527.5 2076.5,1527.5 C2073,1527.5 2071,1525.5 2071,1522 V1521 C2071,1518 2072,1516 2075,1516 Z" stroke="#6785a1" stroke-width="3" fill="none" stroke-linecap="round" stroke-linejoin="round" />
<path d="M2065.8,1533.3 V1536 M2073.2,1533.3 V1536" stroke="#6785a1" stroke-width="3" fill="none" stroke-linecap="round" stroke-linejoin="round" />
<path d="M2130,1528 L2137.5,1537.5 L2154,1517" stroke="#6785a1" stroke-width="2.4" fill="none" stroke-linecap="round" stroke-linejoin="round" />
<circle cx="2316.5" cy="1527" r="5.5" stroke="#6785a1" stroke-width="2.3" fill="none"/>
<path d="M2308,1541 C2308,1535 2312,1532.5 2316.5,1532.5 C2321,1532.5 2325,1535 2325,1541" stroke="#6785a1" stroke-width="2.3" fill="none" stroke-linecap="round" stroke-linejoin="round" />
<path d="M2316,1518 V1513 H2336 V1527 H2329 L2324,1532 V1527" stroke="#6785a1" stroke-width="2.3" fill="none" stroke-linecap="round" stroke-linejoin="round" />
<path d="M2382.5,1537 H2406 L2402,1531 V1522 C2402,1516 2398,1513 2394,1513 C2390,1513 2386,1516 2386,1522 V1531 Z M2390.5,1538 a3.5,3.5 0 0 0 7,0" stroke="#6785a1" stroke-width="2.3" fill="none" stroke-linecap="round" stroke-linejoin="round" />
</svg>
</body></html>
